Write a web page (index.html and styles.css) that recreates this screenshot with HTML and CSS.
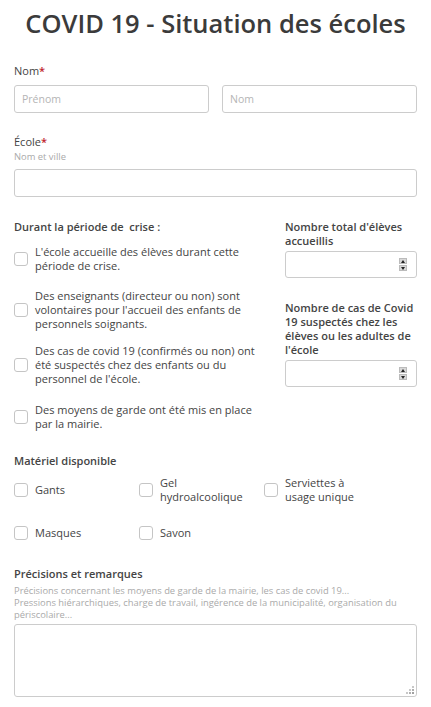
FILE: index.html
```html
<!DOCTYPE html>
<html lang="fr">

<head>
    <meta charset="UTF-8">
    <meta name="viewport" content="width=device-width, initial-scale=1.0">
    <title>COVID 19 - Situation des écoles</title>
    <link rel="stylesheet" href="styles.css">
</head>

<body>
    <form class="form">
        <h1 class="title">COVID 19 - Situation des écoles</h1>

        <div class="field">
            <label class="label">Nom<span class="req">*</span></label>
            <div class="name-row">
                <input class="input" type="text" placeholder="Prénom">
                <input class="input" type="text" placeholder="Nom">
            </div>
        </div>

        <div class="field school">
            <label class="label">École<span class="req">*</span></label>
            <div class="hint">Nom et ville</div>
            <input class="input" type="text">
        </div>

        <div class="crisis">
            <div class="crisis-left">
                <div class="label strong">Durant la période de &nbsp;crise :</div>
                <label class="check">
                    <span class="box"></span>
                    <span>L'école accueille des élèves durant cette période de crise.</span>
                </label>
                <label class="check">
                    <span class="box"></span>
                    <span>Des enseignants (directeur ou non) sont volontaires pour l'accueil des enfants de personnels soignants.</span>
                </label>
                <label class="check">
                    <span class="box"></span>
                    <span>Des cas de covid 19 (confirmés ou non) ont été suspectés chez des enfants ou du personnel de l'école.</span>
                </label>
                <label class="check">
                    <span class="box"></span>
                    <span>Des moyens de garde ont été mis en place par la mairie.</span>
                </label>
            </div>
            <div class="crisis-right">
                <div class="label strong">Nombre total d'élèves accueillis</div>
                <div class="number">
                    <input class="input" type="text">
                    <span class="spin"><span class="up"></span><span class="down"></span></span>
                </div>
                <div class="label strong second">Nombre de cas de Covid 19 suspectés chez les élèves ou les adultes de l'école</div>
                <div class="number">
                    <input class="input" type="text">
                    <span class="spin"><span class="up"></span><span class="down"></span></span>
                </div>
            </div>
        </div>

        <div class="material">
            <div class="label strong">Matériel disponible</div>
            <div class="material-grid">
                <label class="check"><span class="box"></span><span>Gants</span></label>
                <label class="check"><span class="box"></span><span>Gel<br>hydroalcoolique</span></label>
                <label class="check"><span class="box"></span><span>Serviettes à<br>usage unique</span></label>
                <label class="check"><span class="box"></span><span>Masques</span></label>
                <label class="check"><span class="box"></span><span>Savon</span></label>
            </div>
        </div>

        <div class="remarks">
            <div class="label strong">Précisions et remarques</div>
            <div class="hint">Précisions concernant les moyens de garde de la mairie, les cas de covid 19...<br>Pressions hiérarchiques, charge de travail, ingérence de la municipalité, organisation du périscolaire...</div>
            <div class="area-wrap">
                <textarea class="area"></textarea>
                <svg class="grip" width="8" height="8" viewBox="0 0 8 8">
                    <rect x="6" y="0" width="2" height="2" fill="#c8c8c8"/>
                    <rect x="3" y="3" width="2" height="2" fill="#c8c8c8"/>
                    <rect x="6" y="3" width="2" height="2" fill="#b0b0b0"/>
                    <rect x="0" y="6" width="2" height="2" fill="#c8c8c8"/>
                    <rect x="3" y="6" width="2" height="2" fill="#b0b0b0"/>
                    <rect x="6" y="6" width="2" height="2" fill="#a0a0a0"/>
                </svg>
            </div>
        </div>
    </form>
</body>

</html>
```

FILE: styles.css
```css
body {
    margin: 0;
    background: #fff;
    font-family: "Open Sans", "Liberation Sans", sans-serif;
    color: #444;
    font-size: 11px;
}

.form {
    padding: 0 14px;
}

.title {
    margin: 5px 0 0;
    text-align: center;
    font-size: 25.5px;
    font-weight: 600;
    color: #3b3b3b;
    line-height: 36px;
}

.field {
    margin-top: 23px;
}

.field.school {
    margin-top: 22px;
}

.label {
    display: block;
    font-size: 11px;
    line-height: 14px;
    color: #444;
}

.strong {
    font-weight: 600;
}

.req {
    color: #c0262d;
    font-weight: 600;
}

.hint {
    font-size: 9.4px;
    line-height: 12px;
    color: #aaa;
    margin-top: 2px;
}

.name-row {
    display: flex;
    gap: 13px;
    margin-top: 7px;
}

.input {
    box-sizing: border-box;
    display: block;
    width: 100%;
    height: 28px;
    border: 1px solid #ccc;
    border-radius: 3px;
    padding: 0 7px;
    font-family: inherit;
    font-size: 10.5px;
    color: #444;
    background: #fff;
}

.input::placeholder {
    color: #b5b5b5;
}

.field .hint + .input {
    margin-top: 6px;
}

.crisis {
    display: grid;
    grid-template-columns: 1fr 132px;
    gap: 15px;
    margin-top: 23px;
}

.crisis-left .check {
    margin-top: 13px;
}

.crisis-left .check:nth-of-type(1) {
    margin-top: 11px;
}

.crisis-left .check:nth-of-type(2) {
    margin-top: 16px;
}

.crisis-left .check:nth-of-type(4) {
    margin-top: 17px;
}

.check {
    display: flex;
    align-items: center;
    gap: 7px;
    line-height: 14px;
    color: #444;
}

.box {
    flex: none;
    box-sizing: border-box;
    width: 14px;
    height: 14px;
    border: 1px solid #c5c5c5;
    border-radius: 3px;
    background: #fff;
}

.number {
    position: relative;
    margin-top: 3px;
}

.number .input {
    height: 27px;
}

.spin {
    position: absolute;
    right: 10px;
    top: 7px;
    width: 8px;
    height: 13px;
    display: flex;
    flex-direction: column;
    gap: 1px;
}

.spin span {
    flex: 1;
    background: #d8d8d8;
    border: 1px solid #bbb;
    box-sizing: border-box;
    position: relative;
}

.spin .up::after,
.spin .down::after {
    content: "";
    position: absolute;
    left: 1px;
    border-left: 2px solid transparent;
    border-right: 2px solid transparent;
}

.spin .up::after {
    top: 1px;
    border-bottom: 3px solid #222;
}

.spin .down::after {
    top: 1px;
    border-top: 3px solid #222;
}

.second {
    margin-top: 23px;
}

.material {
    margin-top: 23px;
}

.material-grid {
    display: grid;
    grid-template-columns: 125px 125px 1fr;
    row-gap: 22px;
    margin-top: 8px;
}

.remarks {
    margin-top: 27px;
}

.remarks .hint {
    margin-top: 4px;
}

.area-wrap {
    position: relative;
    margin-top: 3px;
}

.area {
    box-sizing: border-box;
    display: block;
    width: 100%;
    height: 73px;
    border: 1px solid #ccc;
    border-radius: 3px;
    resize: none;
    font-family: inherit;
}

.grip {
    position: absolute;
    right: 3px;
    bottom: 3px;
}
```
